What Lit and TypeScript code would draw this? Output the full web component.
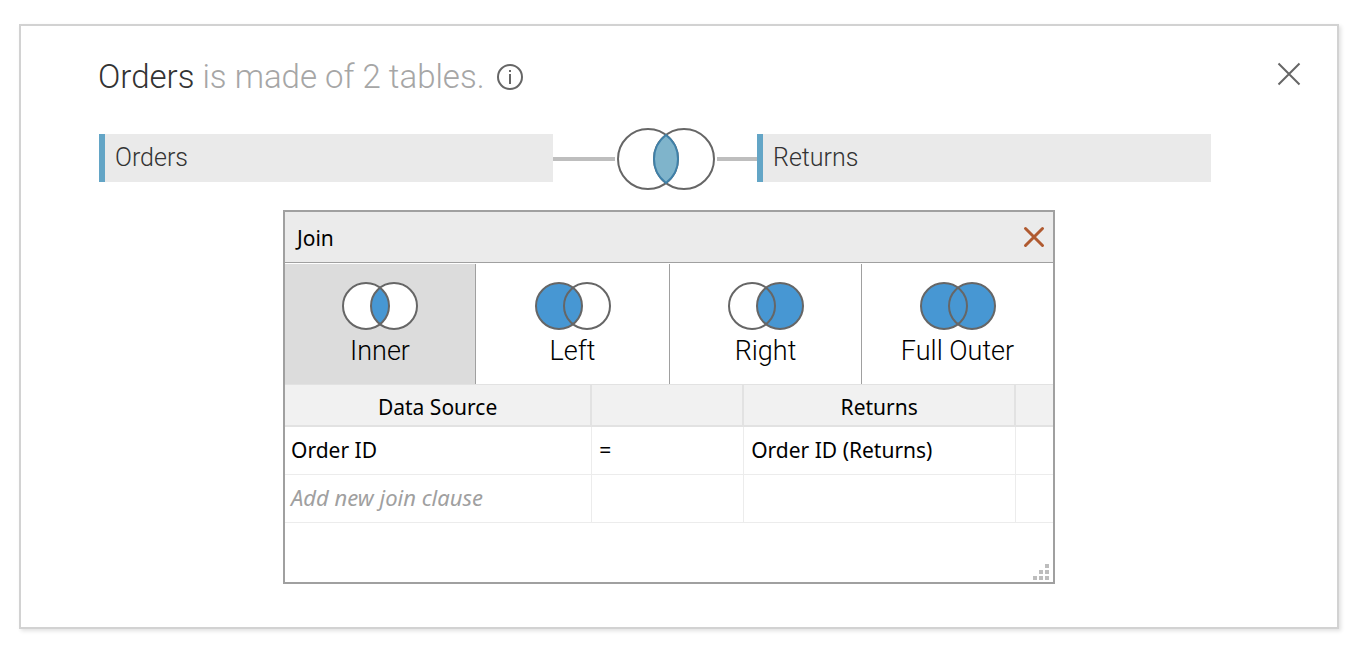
import { LitElement, html, css, svg } from "lit";
import { customElement, property, state } from "lit/decorators.js";
import { classMap } from "lit/directives/class-map.js";

type JoinKind = "inner" | "left" | "right" | "full";

const JOINS: { kind: JoinKind; label: string }[] = [
  { kind: "inner", label: "Inner" },
  { kind: "left", label: "Left" },
  { kind: "right", label: "Right" },
  { kind: "full", label: "Full Outer" },
];

@customElement("join-venn")
export class JoinVenn extends LitElement {
  @property() kind: JoinKind = "inner";

  static styles = css`
    :host { display: block; }
    svg { display: block; }
    .on { fill: #4797d3; }
    .off { fill: #fff; }
    .ring { fill: none; stroke: #666; stroke-width: 2; }
  `;

  render() {
    const left = this.kind === "left" || this.kind === "full";
    const right = this.kind === "right" || this.kind === "full";
    return html`
      <svg width="76" height="48" viewBox="0 0 76 48" aria-hidden="true">
        <circle class="off" cx="24" cy="24" r="23"></circle>
        <circle class="off" cx="52" cy="24" r="23"></circle>
        ${left ? svg`<circle class="on" cx="24" cy="24" r="23"></circle>` : null}
        ${right ? svg`<circle class="on" cx="52" cy="24" r="23"></circle>` : null}
        <path class="on" d="M38 5.75A23 23 0 0 1 38 42.25A23 23 0 0 1 38 5.75Z"></path>
        <circle class="ring" cx="24" cy="24" r="23"></circle>
        <circle class="ring" cx="52" cy="24" r="23"></circle>
      </svg>
    `;
  }
}

@customElement("join-dialog")
export class JoinDialog extends LitElement {
  @state() private kind: JoinKind = "inner";

  static styles = css`
    :host {
      display: block;
      border: 2px solid #a0a0a0;
      background: #fff;
      color: #000;
      font: 21px/28px "Noto Sans", sans-serif;
    }
    button {
      margin: 0;
      padding: 0;
      border: 0;
      background: none;
      color: inherit;
      font: inherit;
      cursor: pointer;
    }
    svg { display: block; }
    .bar {
      display: flex;
      align-items: center;
      justify-content: space-between;
      height: 50px;
      padding: 0 8px 0 12px;
      border-bottom: 1px solid #a0a0a0;
      background: #ebebeb;
    }
    .title { margin: 0; padding-top: 2px; font: inherit; }
    .tabs {
      display: grid;
      grid-template-columns: 191fr 194fr 192fr 191fr;
      margin-top: 1px;
    }
    .tab {
      display: flex;
      flex-direction: column;
      align-items: center;
      gap: 4px;
      height: 120px;
      padding-top: 18px;
      box-sizing: border-box;
      border-right: 1px solid #a0a0a0;
      font: 300 27px/34px Roboto, sans-serif;
    }
    .tab:last-child { border-right: 0; }
    .tab.selected { background: #dcdcdc; }
    table {
      width: 100%;
      table-layout: fixed;
      border-collapse: separate;
      border-spacing: 0;
    }
    .source { width: 40%; }
    .operator { width: 152px; }
    .target { width: 272px; }
    th, td {
      box-sizing: border-box;
      padding: 0 6px;
      font-weight: 400;
    }
    th {
      height: 43px;
      padding-top: 4px;
      border-top: 1px solid #e2e2e2;
      border-right: 2px solid #e2e2e2;
      border-bottom: 2px solid #e2e2e2;
      background: #f1f1f1;
    }
    td {
      height: 48px;
      padding-bottom: 2px;
      padding-left: 7px;
      border-right: 1px solid #ececec;
      border-bottom: 1px solid #ececec;
      text-align: left;
    }
    td:first-child { padding-left: 6px; }
    th:last-child, td:last-child { border-right: 0; }
    .add { color: #a0a0a0; font-size: 22px; font-style: italic; }
    .foot {
      display: flex;
      align-items: flex-end;
      justify-content: flex-end;
      height: 59px;
      padding: 0 4px 2px;
      box-sizing: border-box;
    }
  `;

  render() {
    return html`
      <div class="bar">
        <h2 class="title">Join</h2>
        <button aria-label="Close join">
          <svg width="22" height="22" viewBox="0 0 22 22" fill="none" stroke="#b05a30" stroke-width="3" stroke-linecap="round">
            <path d="M2.500 2.500L19.500 19.500M19.500 2.500L2.500 19.500"></path>
          </svg>
        </button>
      </div>
      <div class="tabs">
        ${JOINS.map(
          (j) => html`
            <button
              class=${classMap({ tab: true, selected: j.kind === this.kind })}
              aria-pressed=${j.kind === this.kind ? "true" : "false"}
              @click=${() => (this.kind = j.kind)}
            >
              <join-venn .kind=${j.kind}></join-venn>
              <span>${j.label}</span>
            </button>
          `
        )}
      </div>
      <table>
        <colgroup>
          <col class="source" />
          <col class="operator" />
          <col class="target" />
          <col />
        </colgroup>
        <thead>
          <tr><th scope="col">Data Source</th><th></th><th scope="col">Returns</th><th></th></tr>
        </thead>
        <tbody>
          <tr><td>Order ID</td><td>=</td><td>Order ID (Returns)</td><td></td></tr>
          <tr><td><button class="add">Add new join clause</button></td><td></td><td></td><td></td></tr>
        </tbody>
      </table>
      <div class="foot">
        <svg width="16" height="16" viewBox="0 0 16 16" fill="#bdbdbd" aria-hidden="true">
          <path d="M12 0h4v4h-4zM6 6h4v4h-4zM12 6h4v4h-4zM0 12h4v4h-4zM6 12h4v4h-4zM12 12h4v4h-4z"></path>
        </svg>
      </div>
    `;
  }
}

@customElement("app-root")
export class AppRoot extends LitElement {
  static styles = css`
    :host {
      display: block;
      padding: 24px 26px 23px 19px;
      background: #fff;
      font-family: Roboto, sans-serif;
      font-weight: 300;
    }
    button {
      margin: 0;
      padding: 0;
      border: 0;
      background: none;
      cursor: pointer;
    }
    svg { display: block; }
    .card {
      padding: 30px 36px 43px 77px;
      border: 2px solid #d2d2d2;
      background: #fff;
      box-shadow: 2px 2px 4px rgba(0, 0, 0, 0.12);
    }
    .head {
      display: flex;
      align-items: flex-start;
      justify-content: space-between;
      height: 72px;
    }
    .heading {
      display: flex;
      align-items: center;
      gap: 12px;
    }
    .title {
      margin: 0;
      color: #a6a6a6;
      font-size: 33px;
      line-height: 42px;
      font-weight: 300;
    }
    .name { color: #333; }
    .close { margin-top: 6px; }
    .body { padding: 0 90px 0 1px; }
    .tables {
      display: grid;
      grid-template-columns: 1fr 204px 1fr;
      align-items: start;
    }
    .table {
      height: 48px;
      margin-top: 6px;
      padding-left: 10px;
      border-left: 6px solid #63a5c6;
      background: #eaeaea;
      color: #333;
      font-size: 25px;
      line-height: 48px;
    }
    .link {
      display: flex;
      align-items: center;
      gap: 2px;
    }
    .line { height: 4px; background: #bebebe; }
    .before { width: 62px; }
    .after { flex: 1; }
    .dialog { margin: 20px 156px 0 184px; }
  `;

  render() {
    return html`
      <main class="card">
        <header class="head">
          <div class="heading">
            <h1 class="title"><span class="name">Orders</span> is made of 2 tables.</h1>
            <button aria-label="About joined tables">
              <svg width="26" height="26" viewBox="0 0 26 26">
                <circle cx="13" cy="13" r="12" fill="none" stroke="#666" stroke-width="2"></circle>
                <path d="M12 10h2v10h-2zM12 6h2v2h-2z" fill="#666"></path>
              </svg>
            </button>
          </div>
          <button class="close" aria-label="Close">
            <svg width="24" height="24" viewBox="0 0 24 24" fill="none" stroke="#666" stroke-width="2">
              <path d="M1.500 1.500L22.500 22.500M22.500 1.500L1.500 22.500"></path>
            </svg>
          </button>
        </header>
        <div class="body">
          <div class="tables">
            <div class="table">Orders</div>
            <div class="link">
              <span class="line before"></span>
              <button aria-label="Edit join">
                <svg width="98" height="62" viewBox="0 0 98 62">
                  <circle cx="31" cy="31" r="30" fill="#fff" stroke="#666" stroke-width="2"></circle>
                  <circle cx="67" cy="31" r="30" fill="none" stroke="#666" stroke-width="2"></circle>
                  <path d="M49 7A30 30 0 0 1 49 55A30 30 0 0 1 49 7Z" fill="#7fb4cb" stroke="#3f80a8" stroke-width="2"></path>
                </svg>
              </button>
              <span class="line after"></span>
            </div>
            <div class="table">Returns</div>
          </div>
          <join-dialog class="dialog"></join-dialog>
        </div>
      </main>
    `;
  }
}
